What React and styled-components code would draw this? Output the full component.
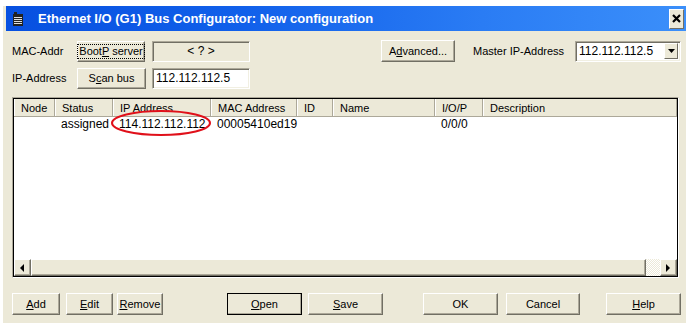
import React from 'react';
import styled, { createGlobalStyle } from 'styled-components';

const GlobalStyle = createGlobalStyle`
  html, body {
    margin: 0;
    padding: 0;
    background: #ffffff;
  }
  body {
    font-family: "Liberation Sans", Arial, sans-serif;
    font-size: 11px;
    color: #000;
  }
`;

const Page = styled.div`
  width: 690px;
  height: 328px;
  padding: 6px 0 0 3px;
  box-sizing: border-box;
`;

const Window = styled.div`
  width: 683px;
  height: 317px;
  background: #ece9d8;
  display: flex;
  flex-direction: column;
`;

const TitleBar = styled.div`
  height: 25px;
  margin-left: 3px;
  display: flex;
  align-items: center;
  background: linear-gradient(to right, #0750e0 0%, #1160ea 35%, #2a7cf4 70%, #3b8ffa 100%);
  color: #fff;
`;

const TitleIcon = styled.svg`
  width: 10px;
  height: 14px;
  margin: 0 15px 0 7px;
  flex: none;
`;

const TitleText = styled.div`
  flex: 1;
  font-family: "Liberation Sans", Arial, sans-serif;
  font-weight: bold;
  font-size: 13px;
`;

const CloseButton = styled.div`
  width: 15px;
  height: 20px;
  margin-right: 2px;
  box-sizing: border-box;
  background: #ece9d8;
  border-top: 1px solid #fff;
  border-left: 1px solid #fff;
  border-right: 1px solid #716f64;
  border-bottom: 1px solid #716f64;
  display: flex;
  align-items: center;
  justify-content: center;
`;

const Body = styled.div`
  flex: 1;
  padding: 9px 0 0 9px;
  display: flex;
  flex-direction: column;
`;

const Row = styled.div`
  display: flex;
  align-items: center;
  height: 22px;
  margin-bottom: ${p => p.$mb || 0}px;
`;

const Label = styled.div`
  width: ${p => p.$w}px;
  margin-left: ${p => p.$ml || 0}px;
  flex: none;
  white-space: nowrap;
`;

const Button = styled.div`
  width: ${p => p.$w}px;
  height: ${p => p.$h || 22}px;
  margin-left: ${p => p.$ml || 0}px;
  flex: none;
  box-sizing: border-box;
  background: #ece9d8;
  border-top: 1px solid #fff;
  border-left: 1px solid #fff;
  border-right: 1px solid #716f64;
  border-bottom: 1px solid #716f64;
  box-shadow: inset -1px -1px 0 #aca899;
  outline: ${p => (p.$default ? '1px solid #000' : 'none')};
  outline-offset: -1px;
  display: flex;
  align-items: center;
  justify-content: center;
  white-space: nowrap;
`;

const FocusRect = styled.span`
  padding: 0 1px;
  border: 1px dotted #000;
  line-height: 13px;
`;

const U = styled.span`
  text-decoration: underline;
`;

const Field = styled.div`
  width: ${p => p.$w}px;
  height: 21px;
  margin-left: ${p => p.$ml || 0}px;
  flex: none;
  box-sizing: border-box;
  background: ${p => (p.$grey ? '#ece9d8' : '#fff')};
  border-top: 1px solid #aca899;
  border-left: 1px solid #aca899;
  border-right: 1px solid #fff;
  border-bottom: 1px solid #fff;
  box-shadow: ${p => (p.$grey ? 'inset 1px 1px 0 #716f64' : 'inset 1px 1px 0 #716f64, inset -1px -1px 0 #f1efe2')};
  display: flex;
  align-items: center;
  justify-content: ${p => (p.$center ? 'center' : 'flex-start')};
  padding-left: ${p => (p.$center ? 0 : 3)}px;
  font-size: 12px;
`;

const ComboField = styled(Field)`
  justify-content: space-between;
  padding-right: 2px;
`;

const ComboButton = styled.div`
  width: 14px;
  height: 16px;
  box-sizing: border-box;
  background: #ece9d8;
  border-top: 1px solid #fff;
  border-left: 1px solid #fff;
  border-right: 1px solid #716f64;
  border-bottom: 1px solid #716f64;
  display: flex;
  align-items: center;
  justify-content: center;
`;

const ListFrame = styled.div`
  width: 667px;
  height: 181px;
  margin-top: 8px;
  box-sizing: border-box;
  border-top: 1px solid #aca899;
  border-left: 1px solid #aca899;
  border-right: 1px solid #fff;
  border-bottom: 1px solid #fff;
  display: flex;
`;

const ListInner = styled.div`
  flex: 1;
  border: 1px solid #000;
  background: #fff;
  display: flex;
  flex-direction: column;
  position: relative;
`;

const HeaderRow = styled.div`
  display: flex;
  height: 17px;
  background: #ece9d8;
  border-bottom: 1px solid #aca899;
`;

const HeaderCell = styled.div`
  width: ${p => p.$w}px;
  flex: none;
  box-sizing: border-box;
  border-left: 1px solid #fff;
  border-right: 1px solid #aca899;
  padding-left: 6px;
  display: flex;
  align-items: center;
  white-space: nowrap;
  overflow: hidden;
`;

const Rows = styled.div`
  flex: 1;
`;

const DataRow = styled.div`
  display: flex;
  height: 13px;
  align-items: center;
`;

const DataCell = styled.div`
  width: ${p => p.$w}px;
  flex: none;
  padding-left: 6px;
  box-sizing: border-box;
  white-space: nowrap;
  font-size: 12px;
`;

const Annotation = styled.svg`
  position: absolute;
  left: 95px;
  top: 10px;
  width: 104px;
  height: 30px;
  pointer-events: none;
`;

const ScrollBar = styled.div`
  height: 17px;
  display: flex;
  background: #f3f1ea;
`;

const ScrollArrow = styled.div`
  width: 17px;
  height: 17px;
  flex: none;
  box-sizing: border-box;
  background: #ece9d8;
  border-top: 1px solid #fff;
  border-left: 1px solid #fff;
  border-right: 1px solid #716f64;
  border-bottom: 1px solid #716f64;
  box-shadow: inset -1px -1px 0 #aca899;
  display: flex;
  align-items: center;
  justify-content: center;
`;

const Thumb = styled(ScrollArrow)`
  width: ${p => p.$w}px;
`;

const Track = styled.div`
  flex: 1;
  background-image: repeating-conic-gradient(#fff 0 25%, #ece9d8 0 50%);
  background-size: 2px 2px;
`;

const ButtonBar = styled.div`
  display: flex;
  margin-top: 15px;
`;

const columns = [
  ['Node', 41],
  ['Status', 58],
  ['IP Address', 98],
  ['MAC Address', 86],
  ['ID', 36],
  ['Name', 102],
  ['I/O/P', 48],
  ['Description', 194],
];

const row = ['', 'assigned', '114.112.112.112', '00005410ed19', '', '', '0/0/0', ''];

const Tri = ({ dir }) => {
  const pts = {
    left: '5,0 5,8 1,4',
    right: '1,0 1,8 5,4',
    down: '0,2 7,2 3.5,6',
  }[dir];
  return (
    <svg width="7" height="8" viewBox="0 0 7 8">
      <polygon points={pts} fill="#000" />
    </svg>
  );
};

const App = () => (
  <>
    <GlobalStyle />
    <Page>
      <Window>
        <TitleBar>
          <TitleIcon viewBox="0 0 10 14">
            <rect x="0" y="2" width="10" height="12" fill="#222" />
            <rect x="1" y="0" width="3" height="2" fill="#222" />
            <rect x="1" y="5" width="8" height="1" fill="#ddd" />
            <rect x="1" y="7" width="8" height="1" fill="#ddd" />
            <rect x="1" y="9" width="8" height="1" fill="#ddd" />
            <rect x="1" y="11" width="8" height="1" fill="#ddd" />
          </TitleIcon>
          <TitleText>Ethernet I/O (G1) Bus Configurator: New configuration</TitleText>
          <CloseButton>
            <svg width="9" height="9" viewBox="0 0 9 9">
              <path d="M1 1 L8 8 M8 1 L1 8" stroke="#000" strokeWidth="2.2" />
            </svg>
          </CloseButton>
        </TitleBar>
        <Body>
          <Row $mb={5}>
            <Label $w={65}>MAC-Addr</Label>
            <Button $w={68} $h={21}>
              <FocusRect>
                Boot<U>P</U> server
              </FocusRect>
            </Button>
            <Field $w={98} $ml={7} $grey $center>
              &lt; ? &gt;
            </Field>
            <Button $w={74} $ml={131}>
              A<U>d</U>vanced...
            </Button>
            <Label $w={102} $ml={18}>
              Master IP-Address
            </Label>
            <ComboField $w={106}>
              112.112.112.5
              <ComboButton>
                <Tri dir="down" />
              </ComboButton>
            </ComboField>
          </Row>
          <Row>
            <Label $w={65}>IP-Address</Label>
            <Button $w={69} $h={21}>
              S<U>c</U>an bus
            </Button>
            <Field $w={98} $ml={6}>
              112.112.112.5
            </Field>
          </Row>
          <ListFrame>
            <ListInner>
              <HeaderRow>
                {columns.map(([name, w]) => (
                  <HeaderCell key={name} $w={w}>
                    {name}
                  </HeaderCell>
                ))}
              </HeaderRow>
              <Rows>
                <DataRow>
                  {row.map((v, i) => (
                    <DataCell key={i} $w={columns[i][1]}>
                      {v}
                    </DataCell>
                  ))}
                </DataRow>
              </Rows>
              <Annotation viewBox="0 0 104 30">
                <ellipse cx="52" cy="14" rx="49" ry="12" fill="none" stroke="#e0101a" strokeWidth="2" />
              </Annotation>
              <ScrollBar>
                <ScrollArrow>
                  <Tri dir="left" />
                </ScrollArrow>
                <Thumb $w={615} />
                <Track />
                <ScrollArrow>
                  <Tri dir="right" />
                </ScrollArrow>
              </ScrollBar>
            </ListInner>
          </ListFrame>
          <ButtonBar>
            <Button $w={48}>
              <U>A</U>dd
            </Button>
            <Button $w={47} $ml={6}>
              <U>E</U>dit
            </Button>
            <Button $w={46} $ml={4}>
              <U>R</U>emove
            </Button>
            <Button $w={75} $ml={64} $default>
              <U>O</U>pen
            </Button>
            <Button $w={75} $ml={6}>
              <U>S</U>ave
            </Button>
            <Button $w={75} $ml={40}>
              OK
            </Button>
            <Button $w={74} $ml={8}>
              Cancel
            </Button>
            <Button $w={75} $ml={26}>
              <U>H</U>elp
            </Button>
          </ButtonBar>
        </Body>
      </Window>
    </Page>
  </>
);

export default App;
